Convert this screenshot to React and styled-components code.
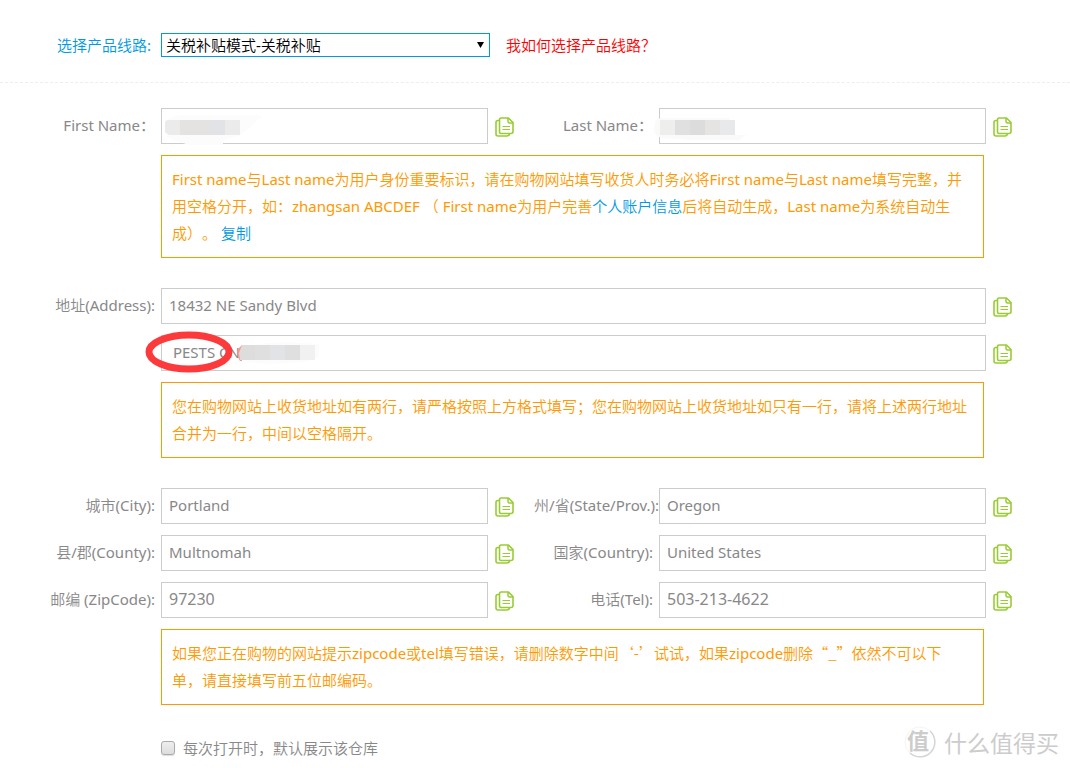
import React, { useState } from "react";
import styled, { createGlobalStyle } from "styled-components";

const GlobalStyle = createGlobalStyle`
  * { box-sizing: border-box; }
  body {
    margin: 0;
    background: #fff;
    color: #888;
    font: 15px/27px "Noto Sans", "Noto Sans CJK SC DemiLight", "Noto Sans CJK SC", sans-serif;
    text-spacing-trim: space-all;
  }
  input, select, button { font: inherit; color: inherit; }
  a { color: #0099e5; text-decoration: none; }
`;

const Page = styled.main`
  position: relative;
  padding-bottom: 6px;
`;

const RouteBar = styled.section`
  display: grid;
  grid-template-columns: 161px minmax(0, 1fr) 564px;
  align-items: center;
  padding: 33px 0 25px;
  margin-bottom: 25px;
  border-bottom: 1px dashed #eee;
`;

const RouteLabel = styled.label`
  padding-right: 10px;
  text-align: right;
  line-height: 24px;
  color: #0099e5;
`;

const SelectWrap = styled.div`
  position: relative;
  display: flex;
  margin-right: 16px;
`;

const Select = styled.select`
  appearance: none;
  width: 100%;
  height: 24px;
  padding: 0 20px 0 4px;
  border: 1px solid #0099e5;
  border-radius: 0;
  background: #fff;
  color: #000;
  line-height: 22px;
`;

const Arrow = styled.svg`
  position: absolute;
  right: 6px;
  top: 9px;
  pointer-events: none;
`;

const HelpLink = styled.a`
  color: #f00;
  line-height: 24px;
`;

const Form = styled.form`
  display: flex;
  flex-direction: column;
  gap: 30px;
`;

const Group = styled.div`
  display: grid;
  grid-template-columns: 161px minmax(0, 1fr) 40px 131px minmax(0, 1fr) 84px;
  row-gap: 11px;
`;

const Label = styled.label`
  grid-column: ${(p) => (p.$second ? 4 : 1)};
  padding-right: ${(p) => (p.$tight ? 0 : 6)}px;
  text-align: right;
  white-space: nowrap;
  line-height: 34px;
  font-family: ${(p) => (p.$latin ? '"Noto Sans", "Noto Sans CJK TC", sans-serif' : "inherit")};
`;

const Field = styled.div`
  position: relative;
  grid-column: ${(p) => (p.$wide ? "2 / 6" : p.$second ? 5 : 2)};
`;

const Input = styled.input`
  display: block;
  width: 100%;
  height: 36px;
  padding: 0 7px 2px;
  border: 1px solid #ccc;
  border-radius: 0;
  background: #fff;
  font-size: ${(p) => (p.$numeric ? 16 : 15)}px;
  outline: none;
`;

const CopyButton = styled.button`
  grid-column: ${(p) => (p.$last ? 6 : 3)};
  display: flex;
  justify-self: start;
  align-self: center;
  margin: 2px 0 0 7px;
  padding: 0;
  border: 0;
  background: none;
  cursor: pointer;
`;

const Note = styled.p`
  grid-column: 2 / 6;
  margin: 0 2px 0 0;
  padding: 10px;
  border: 1px solid #ff9900;
  color: #ff9900;
`;

const Quote = styled.span`
  font-family: "Noto Sans CJK SC DemiLight", "Noto Sans CJK SC", sans-serif;
  line-height: 1;
`;

const Mosaic = styled.svg`
  position: absolute;
  left: ${(p) => p.$left}px;
  top: 0;
  overflow: visible;
  pointer-events: none;
`;

const Remember = styled.label`
  display: flex;
  align-items: center;
  gap: 8px;
  padding-left: 161px;
`;

const Check = styled.input`
  appearance: none;
  width: 14px;
  height: 14px;
  margin: 0 0 2px;
  border: 1px solid #aaa;
  border-radius: 3px;
  background: linear-gradient(#eee, #dcdcdc);
  box-shadow: 0 1px 1px #ddd;
  &:checked { background: #0099e5; }
`;

const Watermark = styled.div`
  position: absolute;
  right: 11px;
  bottom: 10px;
  display: flex;
  align-items: center;
  gap: 9px;
  color: #ccc;
  font-family: "Noto Sans CJK SC", sans-serif;
  font-size: 23px;
  line-height: 32px;
`;

const Seal = styled.svg`
  display: block;
  overflow: visible;
`;

function Copy({ last, name }) {
  return (
    <CopyButton type="button" $last={last} aria-label={`复制 ${name}`}>
      <svg width="19" height="20" viewBox="0 0 19 20" fill="none" stroke="#99cc33" strokeLinejoin="round">
        <path d="M5 3.500H3Q1 3.500 1 5.500V17Q1 19 3 19H12Q14 19 14.500 17" strokeWidth="1.600" />
        <path d="M6 1H13.500L18 5.500V14.500Q18 16.500 16 16.500H6Q4.500 16.500 4.500 14.500V3Q4.500 1 6 1Z" strokeWidth="1.600" />
        <path d="M13 1V4.500Q13 6 14.500 6H18" strokeWidth="1.500" />
        <path d="M7.500 9.500H15M7.500 12.500H15" strokeWidth="1.200" />
      </svg>
    </CopyButton>
  );
}

function Entry({ id, label, value, second, wide, tight, latin, numeric, children }) {
  const [text, setText] = useState(value);
  return (
    <>
      {label && (
        <Label htmlFor={id} $second={second} $tight={tight} $latin={latin}>{label}</Label>
      )}
      <Field $second={second} $wide={wide}>
        <Input
          id={id}
          $numeric={numeric}
          aria-label={label ? undefined : "Address 2"}
          value={text}
          onChange={(e) => setText(e.target.value)}
        />
        {children}
      </Field>
      <Copy last={second || wide} name={label || "Address 2"} />
    </>
  );
}

export default function App() {
  return (
    <Page lang="zh-CN">
      <GlobalStyle />
      <RouteBar>
        <RouteLabel htmlFor="route">选择产品线路:</RouteLabel>
        <SelectWrap>
          <Select id="route">
            <option>关税补贴模式-关税补贴</option>
          </Select>
          <Arrow width="7" height="6" viewBox="0 0 7 6"><path d="M0 0H7L3.500 6Z" /></Arrow>
        </SelectWrap>
        <HelpLink href="#help">我如何选择产品线路？</HelpLink>
      </RouteBar>

      <Form>
        <Group>
          <Entry id="first" label="First Name：" value="" latin>
            <Mosaic $left={0} width="110" height="38" viewBox="0 0 110 38">
              <path d="M4 14Q10 7 22 7H94Q104 8 98 11L80 27Q70 30 62 32V37H28L22 35Q4 31 4 25Z" fill="#fcfcfc" />
              <path d="M6 12H19V27H8L4 24V14Z" fill="#ebebeb" />
              <path d="M19 12H49V27H19Z" fill="#e4e3e2" />
              <path d="M49 12H64V27H49Z" fill="#e1e3e6" />
              <path d="M64 12H79V27H64Z" fill="#ebebeb" />
            </Mosaic>
          </Entry>
          <Entry id="last" label="Last Name：" value="" second latin>
            <Mosaic $left={-6} width="100" height="38" viewBox="0 0 100 38">
              <path d="M2 14Q4 10 10 10H76V27H93L86 32H38L10 30Q0 28 1 20Z" fill="#fafafa" />
              <path d="M7 12H22V27H7Z" fill="#eeeeed" />
              <path d="M22 12H37V27H22Z" fill="#e0e0e0" />
              <path d="M37 12H52V27H37Z" fill="#dcdcdd" />
              <path d="M52 12H67V27H52Z" fill="#e6e4e3" />
              <path d="M67 12H82V27H67Z" fill="#e8e9eb" />
            </Mosaic>
          </Entry>
          <Note>
            First name与Last name为用户身份重要标识，请在购物网站填写收货人时务必将First name与Last name填写完整，并用空格分开，如：zhangsan ABCDEF （ First name为用户完善<a href="#account">个人账户信息</a>后将自动生成，Last name为系统自动生成）。 <a href="#copy">复制</a>
          </Note>
        </Group>

        <Group>
          <Entry id="address" label="地址(Address):" value="18432 NE Sandy Blvd" wide />
          <Entry id="address2" value=" PESTS CN" wide>
            <Mosaic $left={-16} width="190" height="42" viewBox="0 0 190 42">
              <path d="M97 13Q110 8 140 7L174 9V22L160 27Q120 30 100 27Z" fill="#fcfcfc" />
              <path d="M93 14L97 10V26H95Q91 20 93 14Z" fill="#f29a98" />
              <path d="M97 10H110V25H95L94 18Z" fill="#dddddd" />
              <path d="M110 10H125V25H110Z" fill="#dfdfe0" />
              <path d="M125 10H140V25H125Z" fill="#e2e3e7" />
              <path d="M140 10H155V25H140Z" fill="#dfdfdf" />
              <path d="M155 10H170V25H155Z" fill="#f1f1f1" />
              <ellipse cx="44" cy="17" rx="40" ry="17" fill="none" stroke="#fc3a3c" strokeWidth="7" />
            </Mosaic>
          </Entry>
          <Note>
            您在购物网站上收货地址如有两行，请严格按照上方格式填写；您在购物网站上收货地址如只有一行，请将上述两行地址合并为一行，中间以空格隔开。
          </Note>
        </Group>

        <Group>
          <Entry id="city" label="城市(City):" value="Portland" />
          <Entry id="state" label="州/省(State/Prov.):" value="Oregon" second tight />
          <Entry id="county" label="县/郡(County):" value="Multnomah" />
          <Entry id="country" label="国家(Country):" value="United States" second />
          <Entry id="zip" label="邮编 (ZipCode):" value="97230" numeric />
          <Entry id="tel" label="电话(Tel):" value="503-213-4622" second numeric />
          <Note>
            如果您正在购物的网站提示zipcode或tel填写错误，请删除数字中间<Quote>‘-’</Quote>试试，如果zipcode删除<Quote>“_”</Quote>依然不可以下<br />
            单，请直接填写前五位邮编码。
          </Note>
        </Group>

        <Remember>
          <Check type="checkbox" />
          每次打开时，默认展示该仓库
        </Remember>
      </Form>

      <Watermark>
        <Seal width="30" height="30" viewBox="0 0 30 30">
          <path d="M25 4A14 14 0 0 1 5 26" fill="none" stroke="#d4d4d4" strokeWidth="1.500" />
          <path d="M5 26A14 14 0 0 1 25 4" fill="none" stroke="#f4f4f4" />
          <text x="13" y="22" textAnchor="middle" fontSize="22" fontWeight="700" fill="#ccc">值</text>
        </Seal>
        <span>什么值得买</span>
      </Watermark>
    </Page>
  );
}
